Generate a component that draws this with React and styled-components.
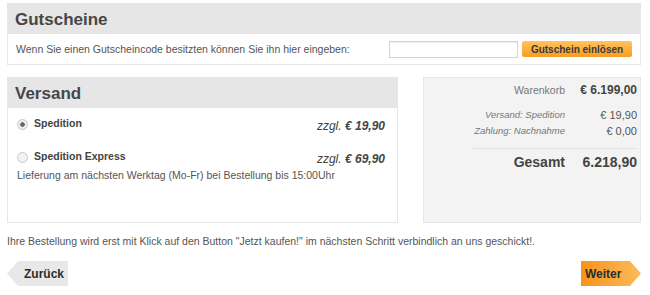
import React from 'react'
import styled, { createGlobalStyle } from 'styled-components'

const Global = createGlobalStyle`
  body {
    margin: 0;
    background: #fff;
    font-family: "Liberation Sans", Arial, sans-serif;
    color: #555;
  }
`

const Page = styled.div`
  width: 634px;
  padding: 3px 9px 0 7px;
`

const Panel = styled.section`
  display: flex;
  flex-direction: column;
  border: 1px solid #e6e6e6;
  background: ${({ $grey }) => ($grey ? '#f3f3f3' : '#fff')};
`

const PanelHead = styled.h2`
  margin: 0;
  height: 30px;
  line-height: 31px;
  padding-left: 7px;
  background: #e6e6e6;
  color: #464646;
  font-size: 17px;
  font-weight: bold;
`

const VoucherBody = styled.div`
  display: flex;
  align-items: center;
  height: 30px;
  padding: 0 8px;
  font-size: 10.5px;
  color: #555;
`

const VoucherText = styled.span`
  flex: 1;
`

const CodeInput = styled.input`
  width: 125px;
  height: 13px;
  border: 1px solid #d2d2d2;
  box-shadow: inset 0 1px 1px #eee;
  padding: 1px;
  margin-right: 4px;
`

const OrangeButton = styled.button`
  width: 110px;
  height: 16px;
  border: 0;
  border-radius: 2px;
  background: linear-gradient(#ffc35e, #f99b23);
  color: #3a3a3a;
  font-family: inherit;
  font-size: 10px;
  font-weight: bold;
  padding: 0;
`

const Columns = styled.div`
  display: grid;
  grid-template-columns: 391px 218px;
  column-gap: 25px;
  height: 146px;
  margin-top: 12px;
`

const ShipBody = styled.div`
  flex: 1;
  padding: 9px 12px 0 9px;
`

const ShipOption = styled.div`
  display: flex;
  align-items: flex-start;
  margin-bottom: ${({ $gap }) => $gap}px;
`

const Radio = styled.span`
  width: 9px;
  height: 9px;
  margin-top: 2px;
  margin-right: 6px;
  border-radius: 50%;
  border: 1px solid #c8c8c8;
  background: radial-gradient(circle, ${({ $checked }) => ($checked ? '#666 0 2px, #eee 2.5px' : '#f2f2f2 0')});
  flex: none;
`

const OptionName = styled.span`
  flex: 1;
  font-size: 10.5px;
  font-weight: bold;
  color: #444;
`

const Price = styled.span`
  margin-top: 2px;
  font-size: 12px;
  font-style: italic;
  color: #444;
`

const OptionNote = styled.div`
  margin-top: 3px;
  font-size: 10.5px;
  color: #555;
`

const Summary = styled.div`
  display: grid;
  grid-template-columns: 1fr 68px;
  column-gap: 4px;
  padding: 4px 3px 0 0;
  align-content: start;
`

const Label = styled.span`
  text-align: right;
  font-size: ${({ $size }) => $size || 11}px;
  font-style: ${({ $italic }) => ($italic ? 'italic' : 'normal')};
  font-weight: ${({ $bold }) => ($bold ? 'bold' : 'normal')};
  color: ${({ $bold }) => ($bold ? '#444' : '#777')};
  line-height: ${({ $lh }) => $lh || 16}px;
  margin-top: ${({ $mt }) => $mt || 0}px;
`

const Value = styled(Label)`
  color: ${({ $bold }) => ($bold ? '#444' : '#555')};
`

const Divider = styled.hr`
  grid-column: 1 / -1;
  margin: 9px 0 0 49px;
  border: 0;
  border-top: 1px solid #e2e2e2;
`

const Notice = styled.p`
  margin: 12px 0 0;
  font-size: 10.5px;
  color: #555;
`

const Nav = styled.div`
  display: flex;
  justify-content: space-between;
  margin-top: 14px;
`

const StepButton = styled.button`
  height: 25px;
  width: ${({ $w }) => $w}px;
  border: 0;
  font-family: inherit;
  font-size: 12px;
  font-weight: bold;
  color: #2c2c2c;
  padding: ${({ $next }) => ($next ? '0 0 0 4px' : '0 0 0 17px')};
  text-align: left;
  background: ${({ $next }) => ($next ? 'linear-gradient(90deg, #f7931c, #fbbb5a)' : '#e8e8e8')};
  clip-path: ${({ $next }) =>
    $next
      ? 'polygon(0 0, calc(100% - 11px) 0, 100% 50%, calc(100% - 11px) 100%, 0 100%)'
      : 'polygon(11px 0, 100% 0, 100% 100%, 11px 100%, 0 50%)'};
`

export default function App() {
  return (
    <Page>
      <Global />
      <Panel>
        <PanelHead>Gutscheine</PanelHead>
        <VoucherBody>
          <VoucherText>Wenn Sie einen Gutscheincode besitzten können Sie ihn hier eingeben:</VoucherText>
          <CodeInput type="text" />
          <OrangeButton>Gutschein einlösen</OrangeButton>
        </VoucherBody>
      </Panel>

      <Columns>
        <Panel>
          <PanelHead>Versand</PanelHead>
          <ShipBody>
            <ShipOption $gap={17}>
              <Radio $checked />
              <OptionName>Spedition</OptionName>
              <Price>zzgl. <b>€ 19,90</b></Price>
            </ShipOption>
            <ShipOption $gap={0}>
              <Radio />
              <OptionName>Spedition Express</OptionName>
              <Price>zzgl. <b>€ 69,90</b></Price>
            </ShipOption>
            <OptionNote>Lieferung am nächsten Werktag (Mo-Fr) bei Bestellung bis 15:00Uhr</OptionNote>
          </ShipBody>
        </Panel>

        <Panel $grey>
          <Summary>
            <Label $size={10.5}>Warenkorb</Label>
            <Value $size={12} $bold>€ 6.199,00</Value>
            <Label $size={9.5} $italic $mt={9}>Versand: Spedition</Label>
            <Value $size={11} $mt={9}>€ 19,90</Value>
            <Label $size={9.5} $italic>Zahlung: Nachnahme</Label>
            <Value $size={11}>€ 0,00</Value>
            <Divider />
            <Label $size={14} $bold $lh={20} $mt={3}>Gesamt</Label>
            <Value $size={14} $bold $lh={20} $mt={3}>6.218,90</Value>
          </Summary>
        </Panel>
      </Columns>

      <Notice>Ihre Bestellung wird erst mit Klick auf den Button "Jetzt kaufen!" im nächsten Schritt verbindlich an uns geschickt!.</Notice>

      <Nav>
        <StepButton $w={61}>Zurück</StepButton>
        <StepButton $w={60} $next>Weiter</StepButton>
      </Nav>
    </Page>
  )
}
